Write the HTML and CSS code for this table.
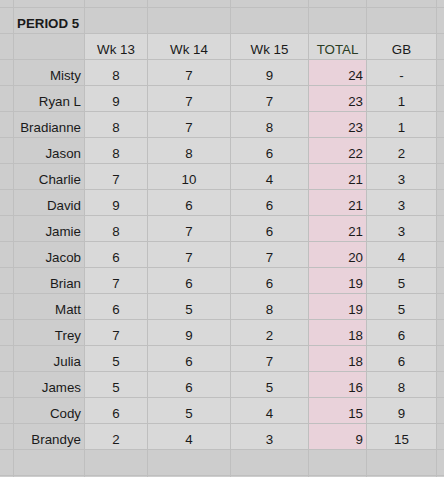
FILE: index.html
```html
<!DOCTYPE html>
<html>
<head>
<meta charset="utf-8">
<link rel="stylesheet" href="styles.css">
</head>
<body>
<div class="sheet">
  <div class="c d"></div><div class="c d"></div><div class="c d"></div><div class="c d"></div><div class="c d"></div><div class="c d"></div><div class="c d"></div><div class="c d"></div>

  <div class="c d"></div><div class="c d l b">PERIOD 5</div><div class="c d"></div><div class="c d"></div><div class="c d"></div><div class="c d"></div><div class="c d"></div><div class="c d"></div>

  <div class="c d"></div><div class="c d"></div><div class="c m">Wk 13</div><div class="c m">Wk 14</div><div class="c m">Wk 15</div><div class="c m tot">TOTAL</div><div class="c m">GB</div><div class="c d"></div>

  <div class="c d"></div><div class="c d r">Misty</div><div class="c m">8</div><div class="c m">7</div><div class="c m">9</div><div class="c p">24</div><div class="c m">-</div><div class="c d"></div>
  <div class="c d"></div><div class="c d r">Ryan L</div><div class="c m">9</div><div class="c m">7</div><div class="c m">7</div><div class="c p">23</div><div class="c m">1</div><div class="c d"></div>
  <div class="c d"></div><div class="c d r">Bradianne</div><div class="c m">8</div><div class="c m">7</div><div class="c m">8</div><div class="c p">23</div><div class="c m">1</div><div class="c d"></div>
  <div class="c d"></div><div class="c d r">Jason</div><div class="c m">8</div><div class="c m">8</div><div class="c m">6</div><div class="c p">22</div><div class="c m">2</div><div class="c d"></div>
  <div class="c d"></div><div class="c d r">Charlie</div><div class="c m">7</div><div class="c m">10</div><div class="c m">4</div><div class="c p">21</div><div class="c m">3</div><div class="c d"></div>
  <div class="c d"></div><div class="c d r">David</div><div class="c m">9</div><div class="c m">6</div><div class="c m">6</div><div class="c p">21</div><div class="c m">3</div><div class="c d"></div>
  <div class="c d"></div><div class="c d r">Jamie</div><div class="c m">8</div><div class="c m">7</div><div class="c m">6</div><div class="c p">21</div><div class="c m">3</div><div class="c d"></div>
  <div class="c d"></div><div class="c d r">Jacob</div><div class="c m">6</div><div class="c m">7</div><div class="c m">7</div><div class="c p">20</div><div class="c m">4</div><div class="c d"></div>
  <div class="c d"></div><div class="c d r">Brian</div><div class="c m">7</div><div class="c m">6</div><div class="c m">6</div><div class="c p">19</div><div class="c m">5</div><div class="c d"></div>
  <div class="c d"></div><div class="c d r">Matt</div><div class="c m">6</div><div class="c m">5</div><div class="c m">8</div><div class="c p">19</div><div class="c m">5</div><div class="c d"></div>
  <div class="c d"></div><div class="c d r">Trey</div><div class="c m">7</div><div class="c m">9</div><div class="c m">2</div><div class="c p">18</div><div class="c m">6</div><div class="c d"></div>
  <div class="c d"></div><div class="c d r">Julia</div><div class="c m">5</div><div class="c m">6</div><div class="c m">7</div><div class="c p">18</div><div class="c m">6</div><div class="c d"></div>
  <div class="c d"></div><div class="c d r">James</div><div class="c m">5</div><div class="c m">6</div><div class="c m">5</div><div class="c p">16</div><div class="c m">8</div><div class="c d"></div>
  <div class="c d"></div><div class="c d r">Cody</div><div class="c m">6</div><div class="c m">5</div><div class="c m">4</div><div class="c p">15</div><div class="c m">9</div><div class="c d"></div>
  <div class="c d"></div><div class="c d r">Brandye</div><div class="c m">2</div><div class="c m">4</div><div class="c m">3</div><div class="c p">9</div><div class="c m">15</div><div class="c d"></div>

  <div class="c d"></div><div class="c d"></div><div class="c d"></div><div class="c d"></div><div class="c d"></div><div class="c d"></div><div class="c d"></div><div class="c d"></div>
  <div class="c d"></div><div class="c d"></div><div class="c d"></div><div class="c d"></div><div class="c d"></div><div class="c d"></div><div class="c d"></div><div class="c d"></div>
</div>
</body>
</html>
```

FILE: styles.css
```css
html, body {
  margin: 0;
  padding: 0;
  background: #cdcdcd;
  overflow: hidden;
}

.sheet {
  display: grid;
  grid-template-columns: 13px 70px 62px 82px 77px 57px 69px 7px;
  grid-template-rows: 7px repeat(18, 25px) 1px;
  gap: 1px;
  background: #bfbfbf;
  width: 444px;
  height: 477px;
  font-family: "Liberation Sans", Arial, sans-serif;
  font-size: 13.33px;
  color: #1a1a1a;
}

.c {
  display: flex;
  align-items: flex-end;
  padding: 0 3px 2px 3px;
  overflow: hidden;
  white-space: nowrap;
  box-sizing: border-box;
  min-width: 0;
  min-height: 0;
}

.d {
  background: #cdcdcd;
}

.m {
  background: #d9d9d9;
  justify-content: center;
}

.p {
  background: #e9d2da;
  justify-content: flex-end;
}

.l {
  justify-content: flex-start;
}

.r {
  justify-content: flex-end;
}

.b {
  font-weight: bold;
}

.tot {
  color: #2a3d24;
}
```
